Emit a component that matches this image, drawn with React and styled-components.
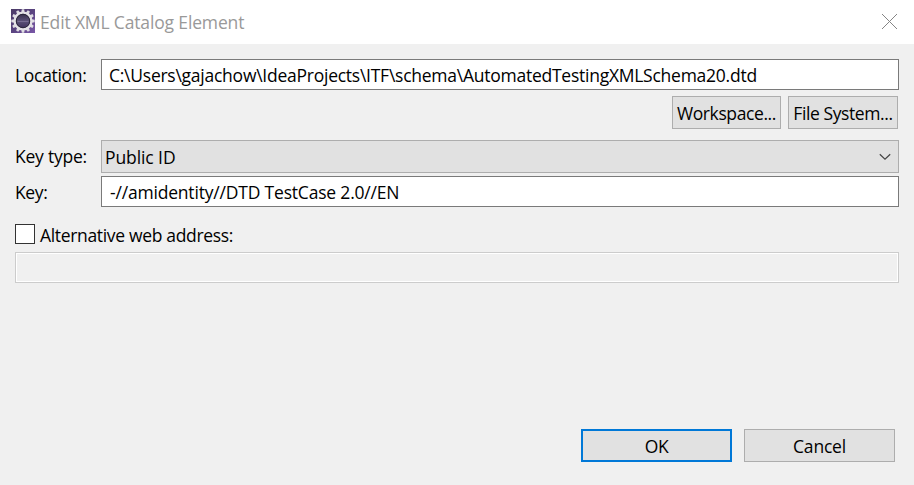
import React from "react";
import styled, { createGlobalStyle } from "styled-components";

const GlobalStyle = createGlobalStyle`
  * { box-sizing: border-box; }
  body { margin: 0; background: #f0f0f0; }
`;

const Dialog = styled.main`
  display: flex;
  flex-direction: column;
  width: 914px;
  height: 485px;
  overflow: hidden;
  background: #f0f0f0;
  color: #000;
  font: 17.5px/24px "Open Sans", "Noto Sans", sans-serif;
`;

const TitleBar = styled.header`
  display: flex;
  align-items: center;
  height: 44px;
  padding: 0 16px 2px 11px;
  background: #fff;
`;

const Title = styled.h1`
  flex: 1;
  margin: 2px 0 0 5px;
  color: #999;
  font: inherit;
  letter-spacing: -0.15px;
`;

const CloseButton = styled.button`
  display: flex;
  padding: 0;
  border: 0;
  background: none;
`;

const Form = styled.section`
  display: grid;
  grid-template-columns: 86px 798px;
  grid-template-rows: 31px 6px 33px 11px 33px 3px 31px;
  padding: 15px 15px 0;
`;

const Label = styled.label`
  grid-column: 1;
  grid-row: ${(p) => p.$row};
  align-self: start;
  padding-top: 4px;
  white-space: nowrap;
  letter-spacing: ${(p) => p.$spacing}px;
`;

const TextField = styled.input`
  grid-column: 2;
  grid-row: ${(p) => p.$row};
  width: 100%;
  height: 31px;
  padding: 0 7px 0 ${(p) => p.$inset ?? 7}px;
  border: 1px solid #7a7a7a;
  border-radius: 0;
  outline: 0;
  background: #fff;
  color: #000;
  font: inherit;
  letter-spacing: ${(p) => p.$spacing}px;

  &:disabled {
    border-color: #ccc;
    background: #f0f0f0;
    box-shadow: inset 0 0 0 1px #fff;
  }
`;

const BrowseActions = styled.div`
  grid-column: 2;
  grid-row: 3;
  display: flex;
  justify-content: flex-end;
  gap: 7px;
  padding-right: 1px;
`;

const Button = styled.button`
  width: ${(p) => p.$width}px;
  height: 33px;
  padding: 0;
  border: ${(p) => (p.$primary ? "2px solid #0078d7" : "1px solid #adadad")};
  border-radius: 0;
  background: #e1e1e1;
  color: #000;
  font: inherit;
  line-height: 24px;
  letter-spacing: ${(p) => p.$spacing}px;
  white-space: nowrap;
`;

const Select = styled.div`
  grid-column: 2;
  grid-row: 5;
  display: flex;
  align-items: center;
  justify-content: space-between;
  padding: 0 7px 0 3px;
  border: 1px solid #adadad;
  background: #e1e1e1;
  letter-spacing: -0.09px;
`;

const Alternative = styled.section`
  display: flex;
  flex-direction: column;
  gap: 8px;
  padding: 17px 15px 0;
`;

const CheckLabel = styled.label`
  display: flex;
  height: 20px;
  gap: 5px;
  line-height: 22px;
  letter-spacing: -0.33px;
`;

const Checkbox = styled.input`
  appearance: none;
  width: 20px;
  height: 20px;
  margin: 0;
  border: 1px solid #333;
  background: #fff;
`;

const Footer = styled.footer`
  display: flex;
  justify-content: flex-end;
  gap: 12px;
  margin-top: auto;
  padding: 0 19px 23px 0;
`;

const TEETH = Array.from({ length: 12 }, (_, i) => i * 30);

function GearIcon() {
  return (
    <svg width="24" height="24" viewBox="0 0 24 24">
      <defs>
        <linearGradient id="tile" x1="0" y1="0" x2="1" y2="1">
          <stop offset="0" stopColor="#4b3a66" />
          <stop offset="0.5" stopColor="#5a4480" />
          <stop offset="1" stopColor="#7a58a8" />
        </linearGradient>
        <linearGradient id="core" x1="0" y1="0" x2="0" y2="1">
          <stop offset="0" stopColor="#302a43" />
          <stop offset="0.5" stopColor="#5c5278" />
          <stop offset="1" stopColor="#3b2c58" />
        </linearGradient>
      </defs>
      <path fill="url(#tile)" d="M0 0h24v24H0z" />
      <g fill="#dedce2">
        {TEETH.map((a) => (
          <path key={a} d="M10.8 .3h2.4l.5 3.2h-3.4z" transform={`rotate(${a} 12 12)`} />
        ))}
      </g>
      <circle cx="12" cy="12" r="8.4" fill="url(#core)" stroke="#e4e2e6" strokeWidth="2.4" />
      <circle cx="12" cy="12" r="6.7" fill="none" stroke="#2b273a" strokeWidth="1" />
      <path d="M6.5 12.5h11" stroke="#786d92" strokeWidth="1" />
    </svg>
  );
}

export default function App() {
  return (
    <>
      <GlobalStyle />
      <Dialog>
        <TitleBar>
          <GearIcon />
          <Title>Edit XML Catalog Element</Title>
          <CloseButton aria-label="Close">
            <svg width="17" height="17" viewBox="0 0 17 17">
              <path d="M1 1l15 15M16 1L1 16" stroke="#858585" strokeWidth="1" />
            </svg>
          </CloseButton>
        </TitleBar>
        <Form>
          <Label $row={1} $spacing={-0.3}>Location:</Label>
          <TextField
            $row={1}
            $spacing={-0.25}
            aria-label="Location"
            defaultValue="C:\Users\gajachow\IdeaProjects\ITF\schema\AutomatedTestingXMLSchema20.dtd"
          />
          <BrowseActions>
            <Button $width={109} $spacing={-0.4}>Workspace...</Button>
            <Button $width={110} $spacing={-0.41}>File System...</Button>
          </BrowseActions>
          <Label $row={5} $spacing={-0.23}>Key type:</Label>
          <Select>
            Public ID
            <svg width="12" height="8" viewBox="0 0 12 8">
              <path d="M.8 1.2L6 6.2l5.2-5" fill="none" stroke="#444" strokeWidth="1.2" />
            </svg>
          </Select>
          <Label $row={7} $spacing={-0.35}>Key:</Label>
          <TextField
            $row={7}
            $inset={8}
            $spacing={-0.19}
            aria-label="Key"
            defaultValue="-//amidentity//DTD TestCase 2.0//EN"
          />
        </Form>
        <Alternative>
          <CheckLabel>
            <Checkbox type="checkbox" />
            Alternative web address:
          </CheckLabel>
          <TextField disabled aria-label="Alternative web address" />
        </Alternative>
        <Footer>
          <Button $primary $width={151} $spacing={-0.5}>OK</Button>
          <Button $width={151} $spacing={-0.2}>Cancel</Button>
        </Footer>
      </Dialog>
    </>
  );
}
